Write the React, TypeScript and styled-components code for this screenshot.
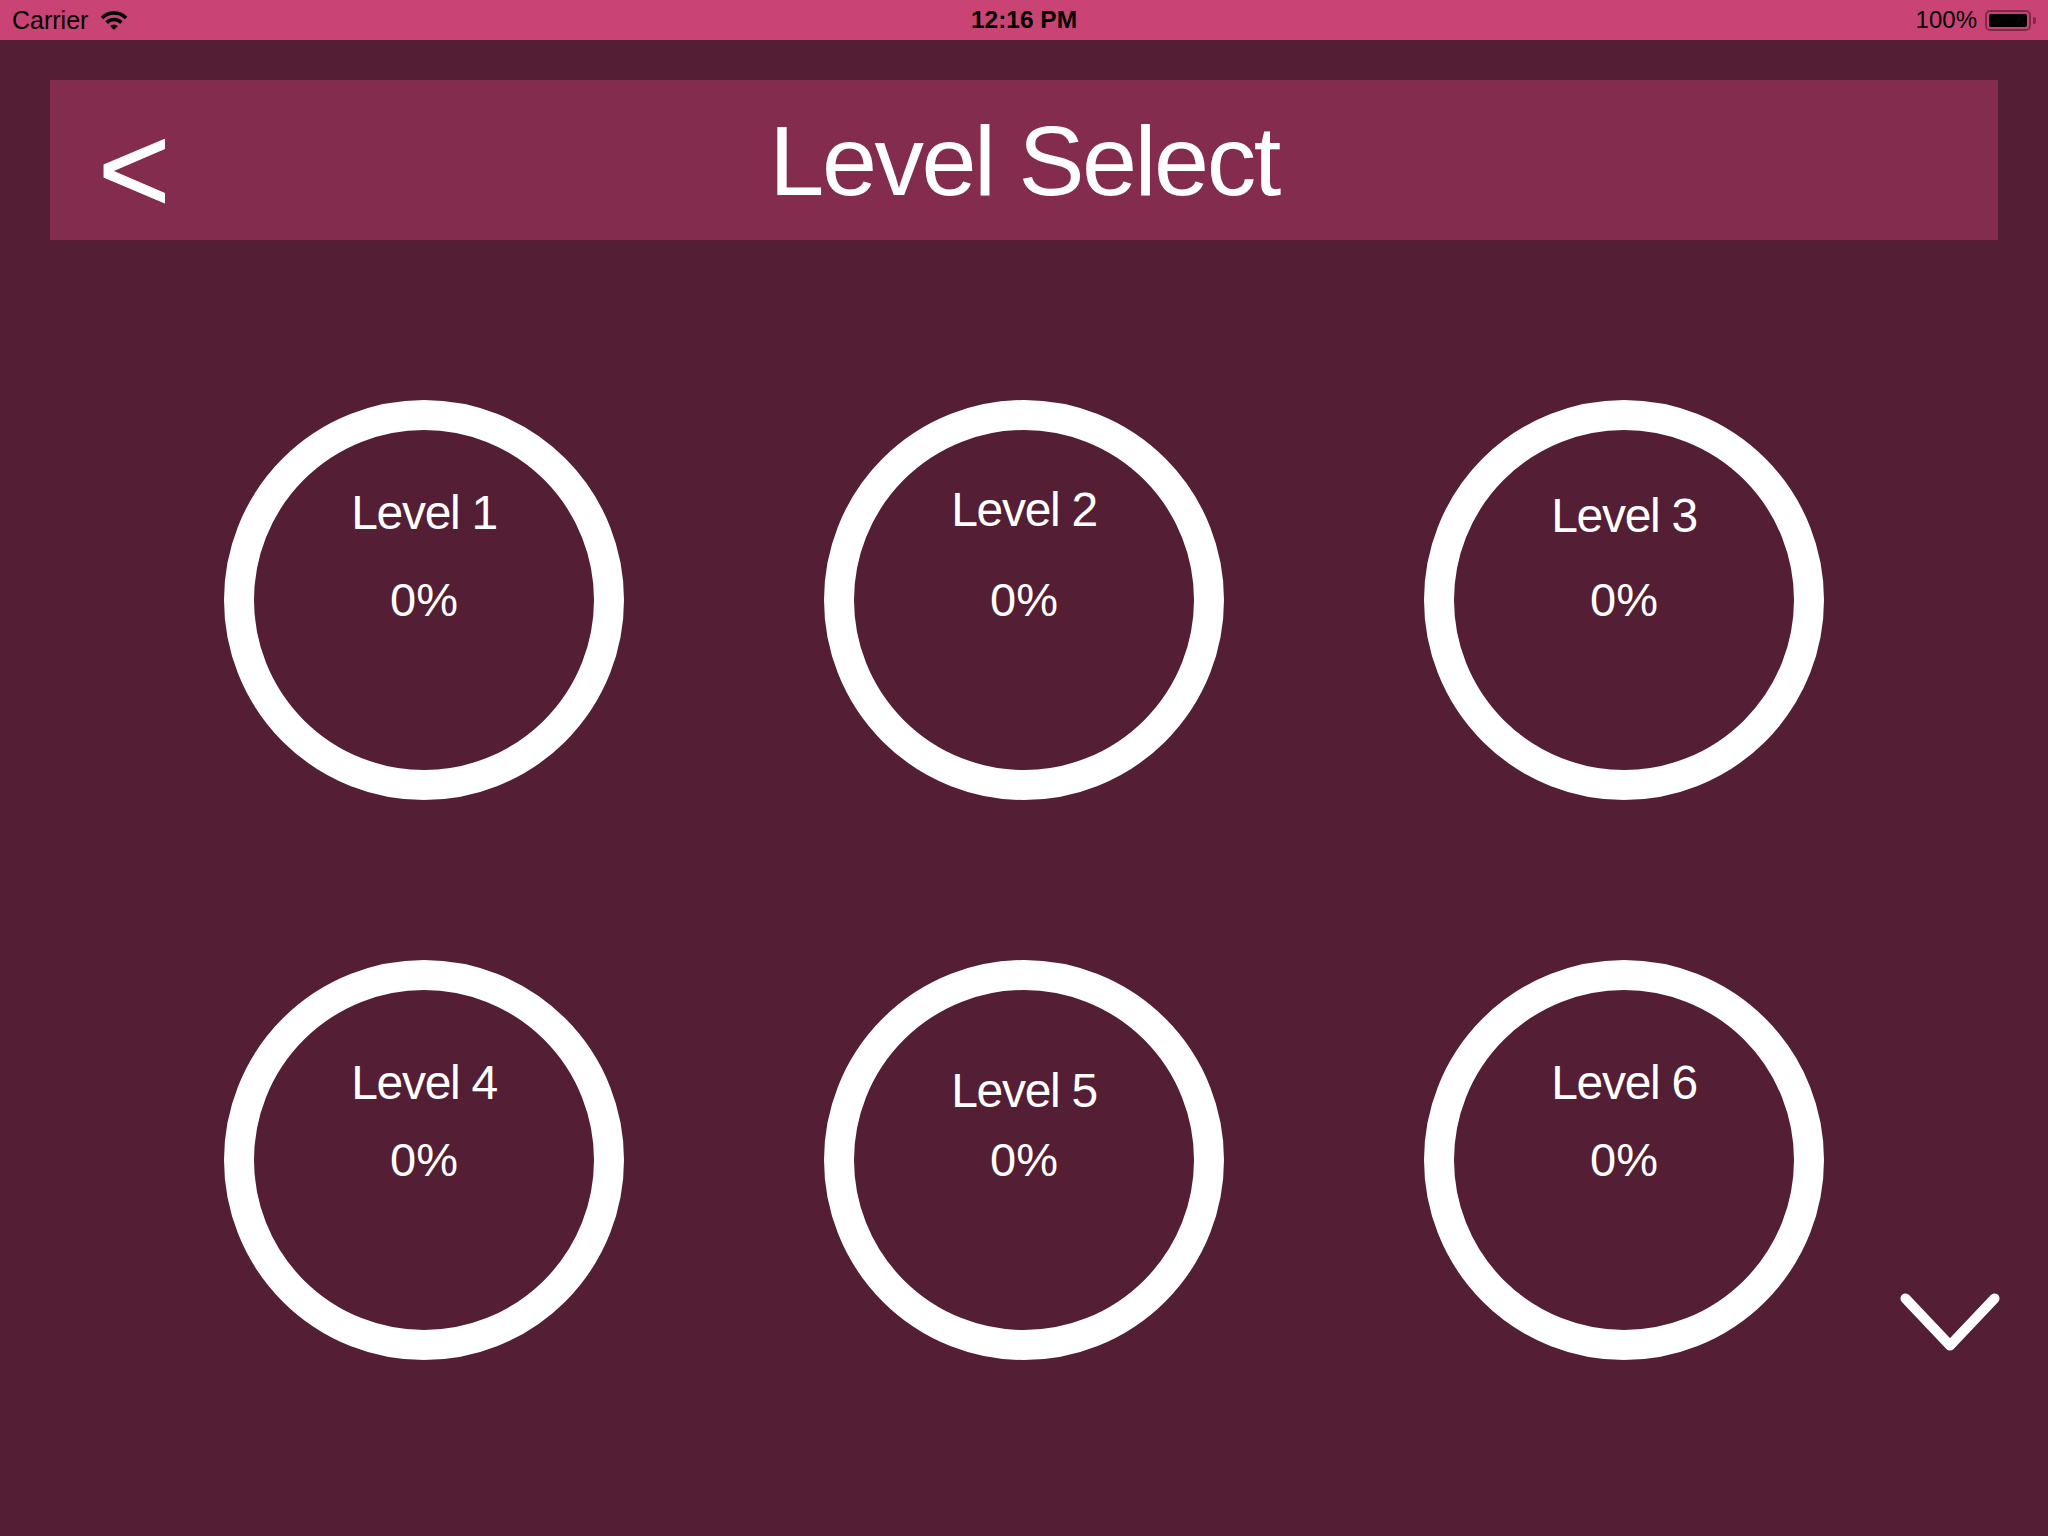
import React from "react";
import styled, { createGlobalStyle } from "styled-components";

const GlobalStyle = createGlobalStyle`
  html, body {
    margin: 0;
    padding: 0;
    background-color: #541f34;
  }
  body {
    font-family: "Liberation Sans", Arial, sans-serif;
  }
`;

interface Level {
  id: number;
  progress: number;
  labelGap: number;
}

const levels: Level[] = [
  { id: 1, progress: 0, labelGap: 40 },
  { id: 2, progress: 0, labelGap: 43 },
  { id: 3, progress: 0, labelGap: 37 },
  { id: 4, progress: 0, labelGap: 30 },
  { id: 5, progress: 0, labelGap: 22 },
  { id: 6, progress: 0, labelGap: 30 },
];

const Screen = styled.div`
  width: 2048px;
  height: 1536px;
  background-color: #541f34;
  display: flex;
  flex-direction: column;
  overflow: hidden;
`;

const StatusBar = styled.div`
  height: 40px;
  background-color: #c94474;
  display: grid;
  grid-template-columns: 1fr auto 1fr;
  align-items: center;
  padding: 0 12px;
  font-size: 24px;
  color: #000;
`;

const StatusLeft = styled.div`
  display: flex;
  align-items: center;
  gap: 12px;
`;

const Carrier = styled.span`
  font-size: 25px;
`;

const StatusTime = styled.div`
  font-weight: 700;
  font-size: 24.5px;
`;

const StatusRight = styled.div`
  display: flex;
  align-items: center;
  justify-content: flex-end;
  gap: 8px;
`;

const Battery = styled.div`
  display: flex;
  align-items: center;
  gap: 2px;
`;

const BatteryBody = styled.div`
  width: 46px;
  height: 21px;
  box-sizing: border-box;
  border: 2px solid rgba(0, 0, 0, 0.38);
  border-radius: 5px;
  padding: 2px;
`;

const BatteryFill = styled.div`
  width: 100%;
  height: 100%;
  background-color: #000;
  border-radius: 2px;
`;

const BatteryNub = styled.div`
  width: 3px;
  height: 7px;
  background-color: rgba(0, 0, 0, 0.38);
  border-radius: 0 2px 2px 0;
`;

const Content = styled.div`
  position: relative;
  padding: 40px 50px 0;
  display: flex;
  flex-direction: column;
`;

const Header = styled.div`
  height: 160px;
  background-color: #832c4d;
  display: grid;
  grid-template-columns: 1fr auto 1fr;
  align-items: center;
  color: #fff;
`;

const BackButton = styled.div`
  font-size: 124px;
  line-height: 1;
  padding-left: 48px;
  padding-top: 17px;
  cursor: pointer;
  -webkit-text-stroke: 1px #fff;
`;

const Title = styled.h1`
  margin: 0;
  font-size: 99px;
  font-weight: 400;
  line-height: 1;
  letter-spacing: -2.5px;
`;

const LevelGrid = styled.div`
  margin-top: 160px;
  display: grid;
  grid-template-columns: repeat(3, 400px);
  column-gap: 200px;
  row-gap: 160px;
  justify-content: center;
`;

const Ring = styled.div`
  width: 400px;
  height: 400px;
  box-sizing: border-box;
  border: 30px solid #fff;
  border-radius: 50%;
  display: grid;
  grid-template-rows: 1fr auto 1fr;
  justify-items: center;
  color: #fff;
  cursor: pointer;
`;

const RingLabel = styled.div<{ $gap: number }>`
  align-self: end;
  margin-bottom: ${(p) => p.$gap}px;
  font-size: 48px;
  line-height: 1;
  letter-spacing: -1.3px;
`;

const RingPercent = styled.div`
  font-size: 47px;
  line-height: 46px;
`;

const ScrollDown = styled.div`
  position: absolute;
  right: 48px;
  top: 1253px;
  width: 100px;
  height: 58px;
  cursor: pointer;
`;

const WifiIcon = () => (
  <svg width="28" height="21" viewBox="0 0 28 21">
    <path
      d="M2.0 8.0 A17 17 0 0 1 26.0 8.0"
      fill="none"
      stroke="#000"
      strokeWidth="3.6"
    />
    <path
      d="M6.6 12.6 A10.5 10.5 0 0 1 21.4 12.6"
      fill="none"
      stroke="#000"
      strokeWidth="3.6"
    />
    <path d="M14 20 L10.1 16.1 A5.5 5.5 0 0 1 17.9 16.1 Z" fill="#000" />
  </svg>
);

const ChevronDown = () => (
  <svg width="100" height="58" viewBox="0 0 100 58">
    <polyline
      points="5.5,5.5 50,52.5 94.5,5.5"
      fill="none"
      stroke="#fff"
      strokeWidth="10"
      strokeLinecap="round"
      strokeLinejoin="round"
    />
  </svg>
);

const App: React.FC = () => {
  return (
    <>
      <GlobalStyle />
      <Screen>
        <StatusBar>
          <StatusLeft>
            <Carrier>Carrier</Carrier>
            <WifiIcon />
          </StatusLeft>
          <StatusTime>12:16 PM</StatusTime>
          <StatusRight>
            <span>100%</span>
            <Battery>
              <BatteryBody>
                <BatteryFill />
              </BatteryBody>
              <BatteryNub />
            </Battery>
          </StatusRight>
        </StatusBar>
        <Content>
          <Header>
            <BackButton>&lt;</BackButton>
            <Title>Level Select</Title>
            <div />
          </Header>
          <LevelGrid>
            {levels.map((level) => (
              <Ring key={level.id}>
                <RingLabel $gap={level.labelGap}>Level {level.id}</RingLabel>
                <RingPercent>{level.progress}%</RingPercent>
                <div />
              </Ring>
            ))}
          </LevelGrid>
          <ScrollDown>
            <ChevronDown />
          </ScrollDown>
        </Content>
      </Screen>
    </>
  );
};

export default App;
